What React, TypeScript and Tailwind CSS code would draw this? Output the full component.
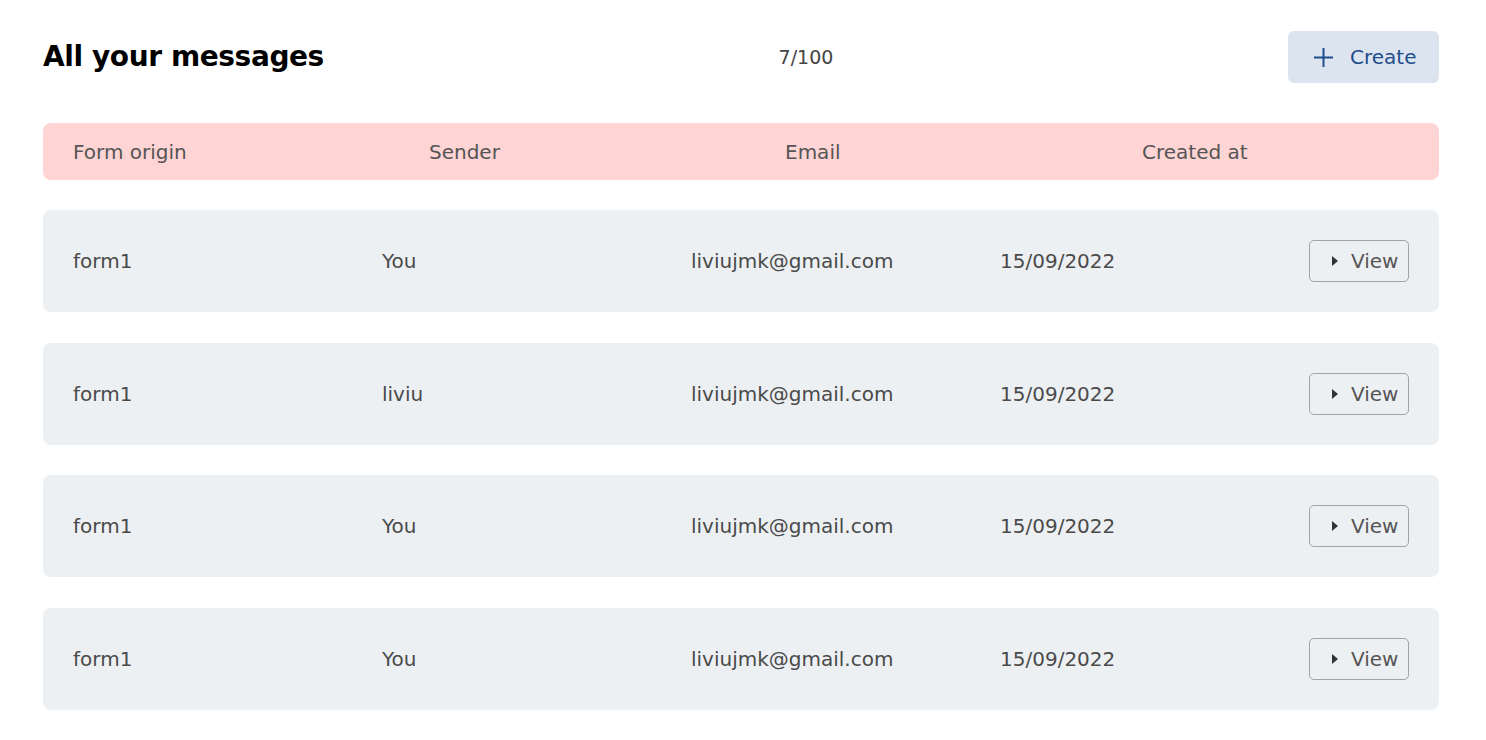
const messages = [
  { origin: "form1", sender: "You", email: "liviujmk@gmail.com", created: "15/09/2022" },
  { origin: "form1", sender: "liviu", email: "liviujmk@gmail.com", created: "15/09/2022" },
  { origin: "form1", sender: "You", email: "liviujmk@gmail.com", created: "15/09/2022" },
  { origin: "form1", sender: "You", email: "liviujmk@gmail.com", created: "15/09/2022" },
];

function PlusIcon() {
  return (
    <svg width="19" height="19" viewBox="0 0 19 19" fill="none" stroke="currentColor" strokeWidth="2">
      <path d="M9.5 0v19M0 9.5h19" />
    </svg>
  );
}

export default function App() {
  return (
    <div className="min-h-screen bg-white pl-[43px] pr-[47px] pt-[31px] font-['DejaVu_Sans',sans-serif] text-[#4a4a4a]">
      <div className="flex h-[52px] items-center justify-between">
        <h1 className="text-[28px] font-bold tracking-[-0.4px] text-black">All your messages</h1>
        <span className="text-[19px] text-[#444]">7/100</span>
        <button className="flex h-[52px] w-[151px] items-center gap-[17px] rounded-[6px] bg-[#dce5ef] pl-[26px] text-[20px] text-[#1f4d8c]">
          <PlusIcon />
          Create
        </button>
      </div>

      <div className="mt-[40px] flex h-[57px] items-center rounded-[8px] bg-[#ffd4d4] px-[30px] text-[20px] text-[#555]">
        <span className="w-[356px]">Form origin</span>
        <span className="w-[356px]">Sender</span>
        <span className="w-[357px]">Email</span>
        <span>Created at</span>
      </div>

      <div className="mt-[30px] flex flex-col gap-[30.67px]">
        {messages.map((m, i) => (
          <div key={i} className="flex h-[102px] items-center rounded-[8px] bg-[#edf0f3] px-[30px] text-[20px]">
            <span className="w-[309px]">{m.origin}</span>
            <span className="w-[309px]">{m.sender}</span>
            <span className="w-[309px]">{m.email}</span>
            <span className="w-[309px]">{m.created}</span>
            <button className="flex h-[42px] w-[100px] items-center gap-[13px] rounded-[5px] border border-[#a3a3a3] pl-[22px] text-[20px] text-[#555]">
              <svg width="6" height="10" viewBox="0 0 6 10">
                <path d="M0 0l6 5-6 5z" fill="#333" />
              </svg>
              View
            </button>
          </div>
        ))}
      </div>
    </div>
  );
}
